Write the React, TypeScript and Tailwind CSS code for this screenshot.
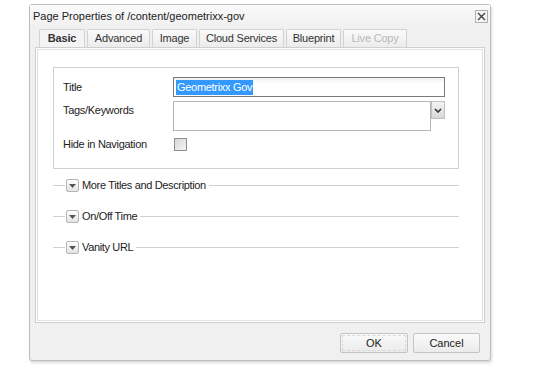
import React from "react";

const font = { fontFamily: '"Liberation Sans", Arial, sans-serif' };

function Section({ label }: { label: string }) {
  return (
    <div className="flex items-center h-[13px]">
      <div className="w-[12px] h-px bg-[#d0d0d0]" />
      <div className="ml-[1px] w-[13px] h-[13px] border border-[#b5b5b5] rounded-[2px] bg-gradient-to-b from-[#fdfdfd] to-[#e4e4e4] flex items-center justify-center">
        <svg width="7" height="4" viewBox="0 0 7 4"><path d="M0 0 L7 0 L3.5 4 Z" fill="#555" /></svg>
      </div>
      <span className="ml-[3px] mr-[3px] text-[11px] tracking-[-0.35px] text-[#222] whitespace-nowrap">{label}</span>
      <div className="flex-1 h-px bg-[#d0d0d0]" />
    </div>
  );
}

function Tab({ label, active, disabled, w }: { label: string; active?: boolean; disabled?: boolean; w: string }) {
  return (
    <div
      className={`${w} h-[18px] mr-[2px] border border-b-0 border-[#d2d2d2] rounded-t-[2px] flex items-center justify-center text-[11px] tracking-[-0.2px] ${
        active ? "bg-[#f4f4f4] font-bold text-[#333]" : "bg-gradient-to-b from-[#fafafa] to-[#ececec]"
      } ${disabled ? "text-[#b8b8b8]" : "text-[#333]"}`}
    >
      {label}
    </div>
  );
}

export default function App() {
  return (
    <div className="w-[540px] h-[389px] bg-white overflow-hidden" style={font}>
      <div className="ml-[29px] mt-[4px] w-[462px] h-[357px] border border-[#bdbdbd] rounded-[3px] bg-[#f0f0f0] shadow-[1px_2px_3px_rgba(0,0,0,0.15)] flex flex-col">
        {/* header */}
        <div className="h-[22px] flex items-center pl-[3px] pr-[2px] bg-gradient-to-b from-[#fafafa] to-[#f0f0f0]">
          <span className="text-[11px] text-[#222] flex-1">Page Properties of /content/geometrixx-gov</span>
          <div className="w-[13px] h-[13px] border border-[#b0b0b0] bg-[#f4f4f4] flex items-center justify-center">
            <svg width="9" height="9" viewBox="0 0 9 9"><path d="M1 1 L8 8 M8 1 L1 8" stroke="#444" strokeWidth="1.4" /></svg>
          </div>
        </div>
        {/* tabs */}
        <div className="pl-[9px] pt-[2px] flex">
          <Tab label="Basic" active w="w-[46px]" />
          <Tab label="Advanced" w="w-[63px]" />
          <Tab label="Image" w="w-[45px]" />
          <Tab label="Cloud Services" w="w-[85px]" />
          <Tab label="Blueprint" w="w-[55px]" />
          <Tab label="Live Copy" disabled w="w-[64px]" />
        </div>
        {/* panel */}
        <div className="mx-[5px] h-[276px] border border-[#cfcfcf] bg-white p-px">
          <div className="h-full border border-[#e2e2e2] pl-[15px] pr-[23px] pt-[17px]">
            <div className="h-[102px] border border-[#d0d0d0] pl-[9px] pt-[9px] pr-[13px]">
              <div className="flex items-center h-[20px]">
                <span className="w-[110px] text-[11px] tracking-[-0.3px] text-[#222]">Title</span>
                <div className="flex-1 h-[20px] border border-[#7a7a7a] bg-gradient-to-b from-[#f0f0f0] to-white to-[30%] flex items-center pl-[2px]">
                  <span className="text-[11px] tracking-[-0.3px] text-white bg-[#3399ff] px-[1px] leading-[15px]">Geometrixx Gov</span>
                </div>
              </div>
              <div className="flex mt-[4px] h-[30px]">
                <span className="w-[110px] text-[11px] tracking-[-0.3px] text-[#222] pt-[1px]">Tags/Keywords</span>
                <div className="flex-1 h-[30px] border border-[#b5b5b5] bg-white" />
                <div className="w-[14px] h-[18px] border border-[#c0c0c0] bg-gradient-to-b from-[#f4f4f4] to-[#d8d8d8] flex items-center justify-center">
                  <svg width="8" height="5" viewBox="0 0 8 5"><path d="M1 1 L4 4 L7 1" stroke="#333" strokeWidth="1.6" fill="none" /></svg>
                </div>
              </div>
              <div className="flex items-center mt-[6px] h-[14px]">
                <span className="w-[111px] text-[11px] tracking-[-0.3px] text-[#222]">Hide in Navigation</span>
                <div className="w-[13px] h-[13px] border border-[#8e8e8e] bg-gradient-to-br from-[#d8d8d8] to-[#f4f4f4]" />
              </div>
            </div>
            <div className="mt-[10px] flex flex-col gap-[18px]">
              <Section label="More Titles and Description" />
              <Section label="On/Off Time" />
              <Section label="Vanity URL" />
            </div>
          </div>
        </div>
        {/* footer */}
        <div className="flex justify-end pr-[10px] pt-[10px] gap-[5px]">
          <div className="w-[68px] h-[20px] border border-[#c4c4c4] rounded-[2px] bg-gradient-to-b from-[#fafafa] to-[#ebebeb] outline outline-1 outline-dashed outline-[#d8d8d8] outline-offset-[-3px] flex items-center justify-center text-[11px] text-[#222]">OK</div>
          <div className="w-[67px] h-[20px] border border-[#c4c4c4] rounded-[2px] bg-gradient-to-b from-[#fafafa] to-[#ebebeb] flex items-center justify-center text-[11px] text-[#222]">Cancel</div>
        </div>
      </div>
    </div>
  );
}
